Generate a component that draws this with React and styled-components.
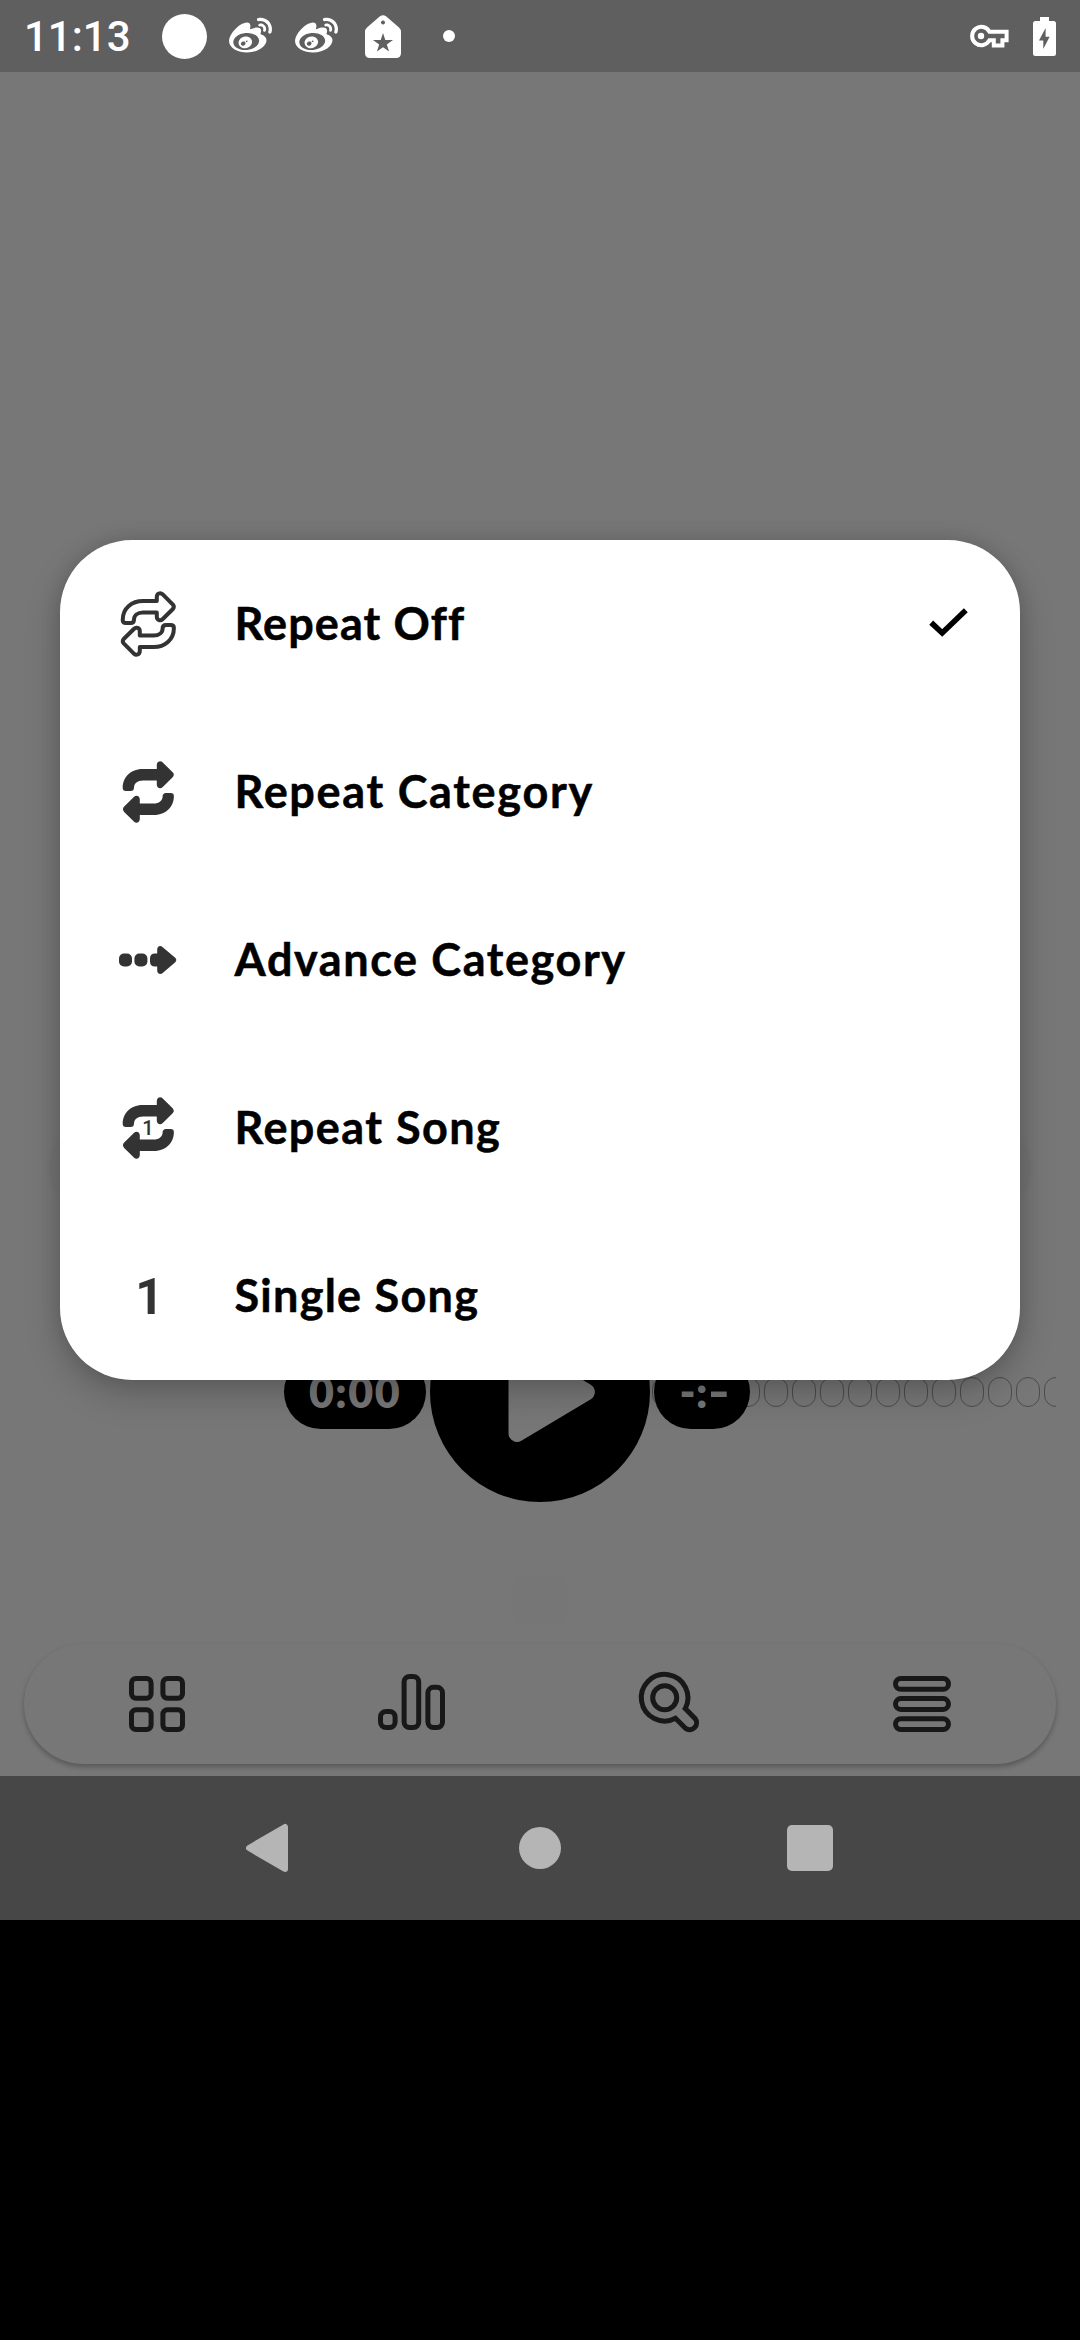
import React from "react";
import styled, { createGlobalStyle } from "styled-components";
import { FaWeibo } from "react-icons/fa";

const GlobalStyle = createGlobalStyle`
  * { box-sizing: border-box; }
  body { margin: 0; background: #000; }
`;

const Device = styled.div`
  position: relative;
  width: 1080px;
  height: 2340px;
  display: flex;
  flex-direction: column;
  background: #000;
  overflow: hidden;
  font-family: Lato, "Open Sans", sans-serif;
`;

const StatusBar = styled.header`
  height: 72px;
  flex: none;
  display: flex;
  align-items: center;
  justify-content: space-between;
  padding: 0 24px 0 24px;
  background: #5f5f5f;
  color: #fff;
`;

const StatusGroup = styled.div`
  display: flex;
  align-items: center;
  height: 72px;
`;

const Clock = styled.span`
  width: 138px;
  font: 500 42px/72px Roboto, sans-serif;
  padding-top: 2px;
`;

const Avatar = styled.span`
  width: 45px;
  height: 45px;
  margin-right: 22px;
  border-radius: 50%;
  background: #fff;
`;

const Dot = styled.span`
  width: 12px;
  height: 12px;
  margin-left: 42px;
  border-radius: 50%;
  background: #fff;
`;

const WeiboMark = styled(FaWeibo)`
  width: 43px;
  height: 43px;
  margin-right: 23px;
`;

const Glyph = styled.svg`
  display: block;
  flex: none;
  overflow: visible;
  width: ${(p) => p.$w}px;
  height: ${(p) => p.$h}px;
  margin-left: ${(p) => p.$ml || 0}px;
`;

const Screen = styled.main`
  height: 1704px;
  flex: none;
  display: flex;
  flex-direction: column;
  background: #777;
`;

const TrackCard = styled.div`
  height: 72px;
  margin: 1058px 50px 0;
  border-radius: 36px;
  background: #747474;
  box-shadow: 0 1px 8px rgba(0, 0, 0, 0.05);
`;

const Transport = styled.section`
  position: relative;
  height: 220px;
  margin-top: 80px;
  display: flex;
  align-items: center;
  justify-content: space-between;
  padding: 0 330px 0 284px;
`;

const Waveform = styled.div`
  position: absolute;
  left: 540px;
  right: 24px;
  top: 95px;
  height: 30px;
  display: flex;
  gap: 4px;
  overflow: hidden;
`;

const WaveCell = styled.span`
  width: 24px;
  height: 30px;
  flex: none;
  border: 1px solid #4c4c4c;
  border-radius: 12px;
`;

const TimePill = styled.div`
  position: relative;
  width: ${(p) => p.$w}px;
  height: 74px;
  border-radius: 37px;
  background: #000;
  color: #777;
  display: flex;
  align-items: center;
  justify-content: center;
  font-size: 43px;
  font-weight: 800;
  line-height: 74px;
  letter-spacing: ${(p) => p.$ls || 0}px;
`;

const WideDash = styled.span`
  display: inline-block;
  transform: scaleX(1.35);
  transform-origin: left center;
`;

const PlayButton = styled.div`
  position: relative;
  width: 220px;
  height: 220px;
  border-radius: 50%;
  background: #000;
  color: #777;
`;

const Handle = styled.div`
  width: 54px;
  height: 50px;
  margin: 73px auto 0;
  border-radius: 16px;
  background: #767676;
`;

const TabBar = styled.nav`
  height: 120px;
  margin: 19px 24px 12px;
  display: flex;
  align-items: center;
  justify-content: space-between;
  padding: 0 105px;
  border-radius: 60px;
  background: #777;
  color: #181818;
  box-shadow: 0 3px 5px rgba(0, 0, 0, 0.26);
`;

const SystemNav = styled.footer`
  height: 144px;
  flex: none;
  display: flex;
  align-items: center;
  justify-content: space-between;
  padding: 0 247px 0 246px;
  background: #474747;
  color: #b5b5b5;
`;

const HomeKey = styled.span`
  width: 42px;
  height: 42px;
  border-radius: 50%;
  background: currentColor;
  margin-right: -4px;
`;

const RecentsKey = styled.span`
  width: 46px;
  height: 46px;
  border-radius: 5px;
  background: currentColor;
`;

const Menu = styled.ul`
  position: absolute;
  left: 60px;
  top: 540px;
  width: 960px;
  margin: 0;
  padding: 0;
  list-style: none;
  border-radius: 72px;
  background: #fff;
  box-shadow: 0 14px 36px rgba(0, 0, 0, 0.2), 0 0 20px rgba(0, 0, 0, 0.12);
`;

const MenuRow = styled.li`
  height: 168px;
  display: flex;
  align-items: center;
  padding: 0 49px 0 52px;
  color: #333;
`;

const MenuLabel = styled.span`
  flex: 1;
  margin-top: -2px;
  padding-left: 50.5px;
  color: #000;
  font-size: 45px;
  font-weight: 700;
  line-height: 52px;
  letter-spacing: ${(p) => p.$ls}px;
  -webkit-text-stroke: 0.5px #000;
  white-space: nowrap;
`;

const ARROW =
  "M10.7 32 C10.7 20 20 13 31 13 H44.8 V9 C44.8 5.4 48.4 4.2 50.5 6.2 L60.9 16.6 Q62.7 18.8 60.9 21 L50.5 31.2 C48.4 33.2 44.8 32.2 44.8 28.8 V24.4 H31 C25.5 24.4 22 27.5 22 31.5 Q22 35 18.5 35 H14 Q10.7 35 10.7 32Z";

const RepeatIcon = ({ outlined, one }) => (
  <Glyph $w={72} $h={72} viewBox="0 0 72 72">
    <g
      fill={outlined ? "none" : "currentColor"}
      stroke={outlined ? "currentColor" : "none"}
      strokeWidth="4"
      strokeLinejoin="round"
    >
      <path d={ARROW} />
      <path d={ARROW} transform="rotate(180 36.3 36)" />
    </g>
    {one && (
      <text x="36" y="43.3" textAnchor="middle" fontFamily="Roboto, sans-serif" fontWeight="500" fontSize="20" fill="currentColor">
        1
      </text>
    )}
  </Glyph>
);

const AdvanceIcon = () => (
  <Glyph $w={72} $h={72} viewBox="0 0 72 72" fill="currentColor">
    <rect x="7" y="29.5" width="13" height="13" rx="5" />
    <rect x="22.4" y="29.5" width="13" height="13" rx="5" />
    <path d="M43 29.5 H45.2 V25.5 C45.2 22 48.5 21 50.7 23.2 L63.5 34 Q65.3 36 63.5 38 L50.7 49 C48.5 51 45.2 50 45.2 46.5 V42.5 H43 Q38 42.5 38 37.5 V34.5 Q38 29.5 43 29.5Z" />
  </Glyph>
);

const OneIcon = () => (
  <Glyph $w={72} $h={72} viewBox="0 0 72 72">
    <text x="37.4" y="54" textAnchor="middle" fontFamily="Roboto, sans-serif" fontWeight="700" fontSize="49.5" fill="currentColor">
      1
    </text>
  </Glyph>
);

const CheckIcon = () => (
  <Glyph $w={42} $h={42} viewBox="0 0 42 42">
    <path d="M2.2 19.6 L13.2 30 L36.8 7.2" fill="none" stroke="#000" strokeWidth="5.6" />
  </Glyph>
);

const OPTIONS = [
  { label: "Repeat Off", icon: <RepeatIcon outlined />, ls: 1.1, checked: true },
  { label: "Repeat Category", icon: <RepeatIcon />, ls: 1.7 },
  { label: "Advance Category", icon: <AdvanceIcon />, ls: 1.6 },
  { label: "Repeat Song", icon: <RepeatIcon one />, ls: 1.45 },
  { label: "Single Song", icon: <OneIcon />, ls: 1.25 },
];

const GridIcon = () => (
  <Glyph $w={56} $h={56} viewBox="0 0 56 56" fill="none" stroke="currentColor" strokeWidth="5">
    <rect x="2.5" y="2.5" width="19.6" height="19.8" rx="4.5" />
    <rect x="33.9" y="2.5" width="19.6" height="19.8" rx="4.5" />
    <rect x="2.5" y="33.7" width="19.6" height="19.8" rx="4.5" />
    <rect x="33.9" y="33.7" width="19.6" height="19.8" rx="4.5" />
  </Glyph>
);

const BarsIcon = () => (
  <Glyph $w={67} $h={60} viewBox="0 0 67 60" fill="none" stroke="currentColor" strokeWidth="5">
    <rect x="2.5" y="37.5" width="14.6" height="16" rx="5.5" />
    <rect x="26.1" y="2.5" width="14.6" height="51" rx="5.5" />
    <rect x="49.9" y="13.3" width="14.6" height="40.2" rx="5.5" />
  </Glyph>
);

const SearchIcon = () => (
  <Glyph $w={61} $h={62} viewBox="0 0 61 62" fill="none" stroke="currentColor" strokeWidth="5">
    <path d="M46.2 35.6 A23.3 23.3 0 1 0 36.5 45.3 L46.4 55.2 A6.9 6.9 0 0 0 56 45.4 Z" />
    <circle cx="25.7" cy="24.7" r="12" />
  </Glyph>
);

const ListIcon = () => (
  <Glyph $w={58} $h={56} viewBox="0 0 58 56" fill="none" stroke="currentColor" strokeWidth="5">
    <rect x="2.5" y="2.5" width="53" height="10.8" rx="5.4" />
    <rect x="2.5" y="22.6" width="53" height="10.8" rx="5.4" />
    <rect x="2.5" y="42.7" width="53" height="10.8" rx="5.4" />
  </Glyph>
);

export default function App() {
  return (
    <>
      <GlobalStyle />
      <Device>
        <StatusBar>
          <StatusGroup>
            <Clock>11:13</Clock>
            <Avatar />
            <WeiboMark />
            <WeiboMark />
            <Glyph $w={36} $h={43} $ml={4} viewBox="0 0 36 43">
              <path
                fill="#fff"
                fillRule="evenodd"
                d="M15 1.3 Q18 -1 21 1.3 L34 12.5 Q36 14.3 36 17 V38 Q36 43 31 43 H5 Q0 43 0 38 V17 Q0 14.3 2 12.5Z M18 5.5 a2 2 0 1 0 0.01 0Z M18 18 L20.3 25 H28 L21.8 29.4 L24.1 36.6 L18 32.2 L11.9 36.6 L14.2 29.4 L8 25 H15.7Z"
              />
            </Glyph>
            <Dot />
          </StatusGroup>
          <StatusGroup>
            <Glyph $w={39} $h={23} viewBox="0 0 39 23">
              <path
                d="M19.5 6.8 H36.6 V15.2 H32.4 V20.6 H23.8 V15.2 H19.5 A9.2 9.2 0 1 1 19.5 6.8Z"
                fill="none"
                stroke="#fff"
                strokeWidth="4"
              />
              <circle cx="11" cy="11" r="3.2" fill="#fff" />
            </Glyph>
            <Glyph $w={23} $h={39} $ml={24} viewBox="0 0 23 39">
              <path
                fill="#fff"
                fillRule="evenodd"
                d="M7 0 H16 V4 H20.5 Q23 4 23 6.5 V36.5 Q23 39 20.5 39 H2.5 Q0 39 0 36.5 V6.5 Q0 4 2.5 4 H7Z M12.6 11 L6 23.5 H10.3 V32 L16.6 19.7 H12.6Z"
              />
            </Glyph>
          </StatusGroup>
        </StatusBar>

        <Screen>
          <TrackCard />
          <Transport>
            <Waveform>
              {Array.from({ length: 19 }, (_, i) => (
                <WaveCell key={i} />
              ))}
            </Waveform>
            <TimePill $w={142} $ls={1.5}>
              0:00
            </TimePill>
            <PlayButton>
              <Glyph $w={220} $h={220} viewBox="0 0 220 220">
                <path
                  d="M87 68.5 L156.5 110 L87 151.5Z"
                  fill="currentColor"
                  stroke="currentColor"
                  strokeWidth="17"
                  strokeLinejoin="round"
                />
              </Glyph>
            </PlayButton>
            <TimePill $w={96} $ls={0.5}>
              -:<WideDash>-</WideDash>
            </TimePill>
          </Transport>
          <Handle />
          <TabBar>
            <GridIcon />
            <BarsIcon />
            <SearchIcon />
            <ListIcon />
          </TabBar>
        </Screen>

        <SystemNav>
          <Glyph $w={42} $h={48} viewBox="0 0 42 48">
            <path
              d="M3 24 L39 3 V45Z"
              fill="currentColor"
              stroke="currentColor"
              strokeWidth="6"
              strokeLinejoin="round"
            />
          </Glyph>
          <HomeKey />
          <RecentsKey />
        </SystemNav>

        <Menu>
          {OPTIONS.map((o) => (
            <MenuRow key={o.label}>
              {o.icon}
              <MenuLabel $ls={o.ls}>{o.label}</MenuLabel>
              {o.checked && <CheckIcon />}
            </MenuRow>
          ))}
        </Menu>
      </Device>
    </>
  );
}
